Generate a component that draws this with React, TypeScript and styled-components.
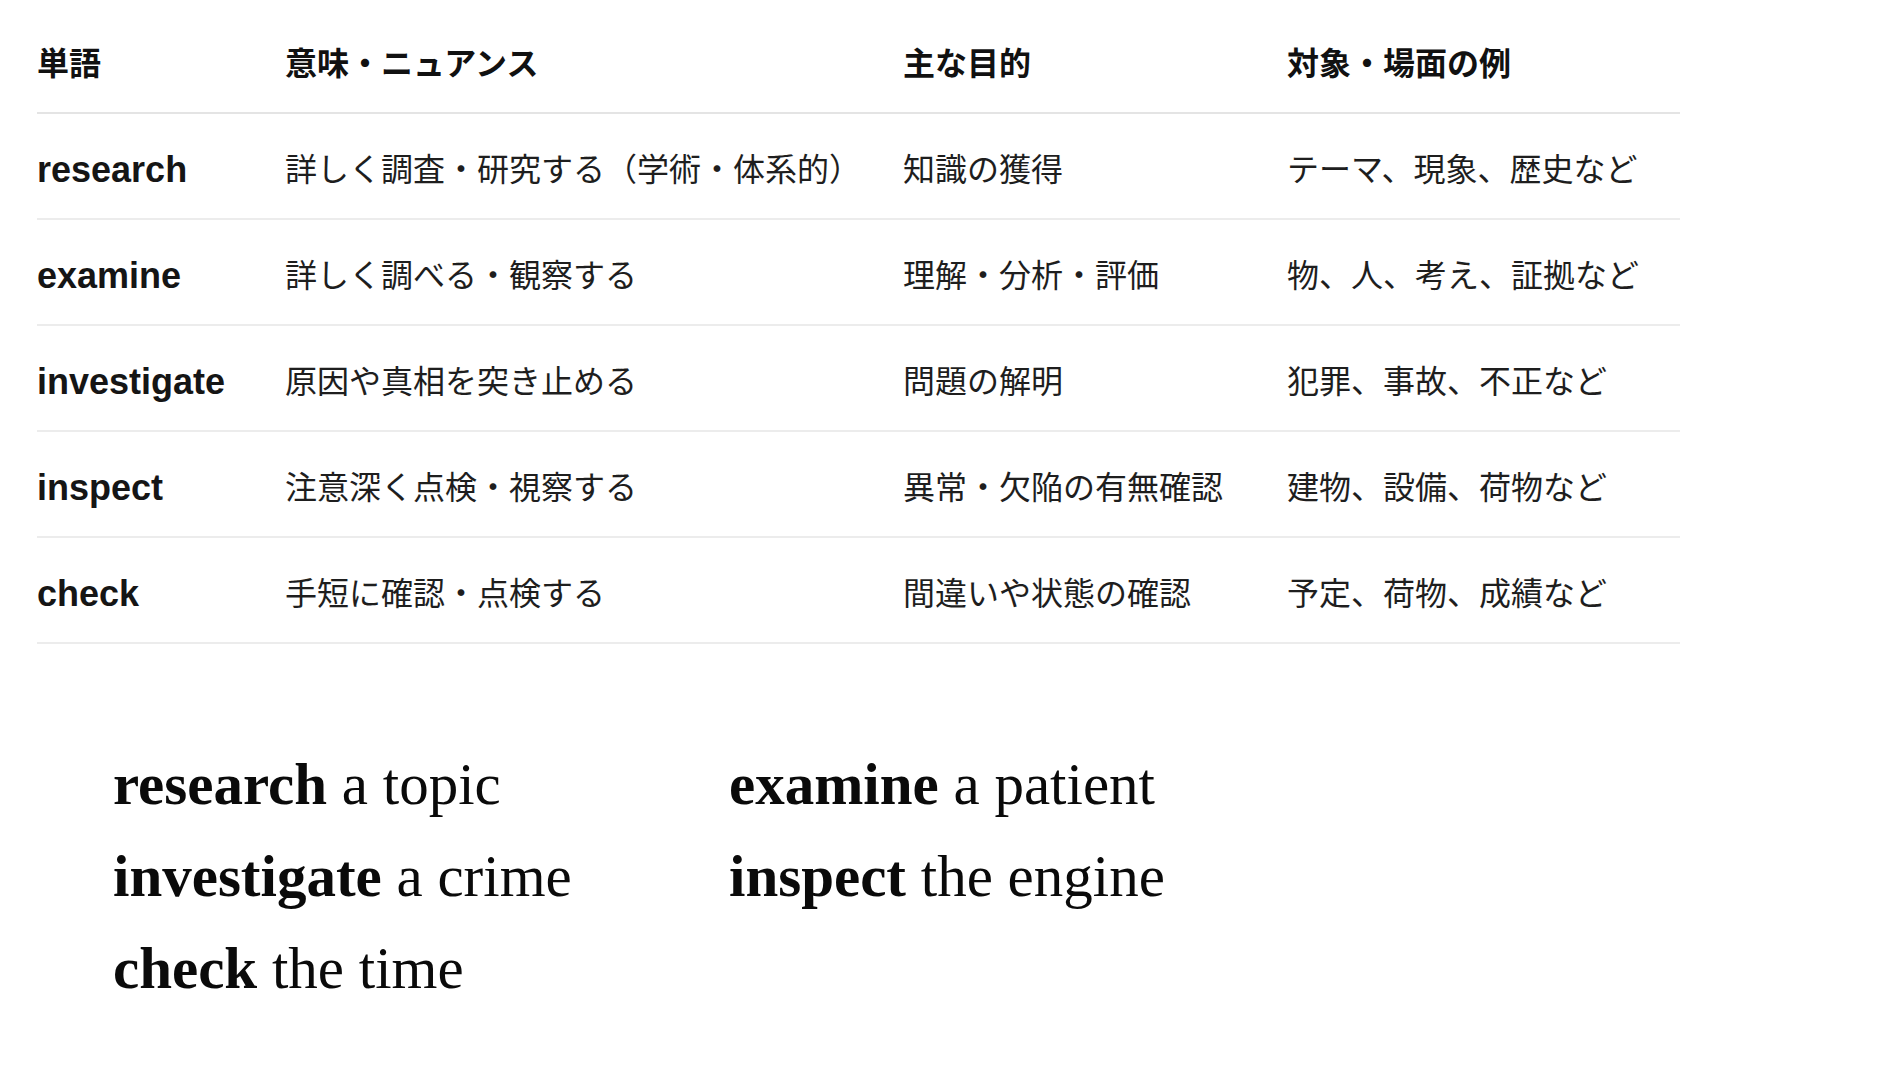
import React from "react";
import styled, { createGlobalStyle } from "styled-components";

const GlobalStyle = createGlobalStyle`
  html, body {
    margin: 0;
    padding: 0;
    background: #ffffff;
  }
  body {
    font-family: "Noto Sans CJK JP", "Liberation Sans", sans-serif;
    color: #1c1c1c;
  }
`;

const Page = styled.main`
  padding: 12px 0 0 37px;
`;

const Table = styled.table`
  width: 1643px;
  table-layout: fixed;
  border-collapse: separate;
  border-spacing: 0;
`;

const HeadCell = styled.th`
  text-align: left;
  font-family: "Noto Sans CJK JP", sans-serif;
  font-weight: 700;
  font-size: 32px;
  line-height: 48px;
  color: #111111;
  padding: 25px 0 27px;
  border-bottom: 2px solid #e4e4e4;
  vertical-align: top;
`;

const Cell = styled.td`
  font-family: "Noto Sans CJK JP", sans-serif;
  font-weight: 400;
  font-size: 32px;
  line-height: 48px;
  color: #1e1e1e;
  padding: 29px 0 27px;
  border-bottom: 2px solid #ececec;
  vertical-align: top;
  white-space: nowrap;
`;

const WordCell = styled(Cell)`
  font-family: "Liberation Sans", Arial, sans-serif;
  font-weight: 700;
  font-size: 36px;
  color: #151515;
  padding: 32px 0 24px;
`;

const Examples = styled.section`
  display: grid;
  grid-template-columns: 616px 616px;
  margin: 94px 0 0 76px;
  font-family: "Liberation Serif", "Times New Roman", serif;
  font-size: 59px;
  line-height: 92px;
  color: #0a0a0a;
`;

const Example = styled.div`
  white-space: nowrap;
`;

const Verb = styled.strong`
  font-weight: 700;
`;

type Row = { word: string; meaning: string; purpose: string; target: string };

const rows: Row[] = [
  { word: "research", meaning: "詳しく調査・研究する（学術・体系的）", purpose: "知識の獲得", target: "テーマ、現象、歴史など" },
  { word: "examine", meaning: "詳しく調べる・観察する", purpose: "理解・分析・評価", target: "物、人、考え、証拠など" },
  { word: "investigate", meaning: "原因や真相を突き止める", purpose: "問題の解明", target: "犯罪、事故、不正など" },
  { word: "inspect", meaning: "注意深く点検・視察する", purpose: "異常・欠陥の有無確認", target: "建物、設備、荷物など" },
  { word: "check", meaning: "手短に確認・点検する", purpose: "間違いや状態の確認", target: "予定、荷物、成績など" },
];

const examples: { verb: string; rest: string }[] = [
  { verb: "research", rest: "a topic" },
  { verb: "examine", rest: "a patient" },
  { verb: "investigate", rest: "a crime" },
  { verb: "inspect", rest: "the engine" },
  { verb: "check", rest: "the time" },
];

export default function App() {
  return (
    <>
      <GlobalStyle />
      <Page>
        <Table>
          <colgroup>
            <col style={{ width: 248 }} />
            <col style={{ width: 618 }} />
            <col style={{ width: 384 }} />
            <col style={{ width: 393 }} />
          </colgroup>
          <thead>
            <tr>
              <HeadCell>単語</HeadCell>
              <HeadCell>意味・ニュアンス</HeadCell>
              <HeadCell>主な目的</HeadCell>
              <HeadCell>対象・場面の例</HeadCell>
            </tr>
          </thead>
          <tbody>
            {rows.map((r) => (
              <tr key={r.word}>
                <WordCell>{r.word}</WordCell>
                <Cell>{r.meaning}</Cell>
                <Cell>{r.purpose}</Cell>
                <Cell>{r.target}</Cell>
              </tr>
            ))}
          </tbody>
        </Table>
        <Examples>
          {examples.map((e) => (
            <Example key={e.verb}>
              <Verb>{e.verb}</Verb> {e.rest}
            </Example>
          ))}
        </Examples>
      </Page>
    </>
  );
}
